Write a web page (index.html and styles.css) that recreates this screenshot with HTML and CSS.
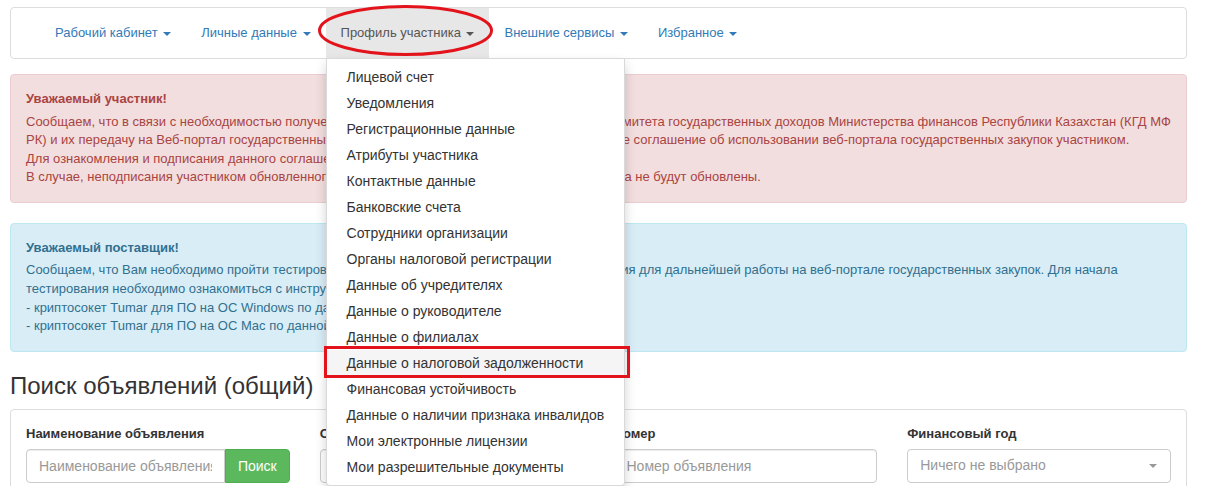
FILE: index.html
```html
<!DOCTYPE html>
<html lang="ru">
<head>
<meta charset="utf-8">
<title>Поиск объявлений</title>
<link rel="stylesheet" href="styles.css">
</head>
<body>
<div class="page">
  <nav class="navbar">
    <ul class="nav">
      <li class="nav-item"><a class="nav-link" href="#">Рабочий кабинет <span class="caret"></span></a></li>
      <li class="nav-item"><a class="nav-link" href="#">Личные данные <span class="caret"></span></a></li>
      <li class="nav-item open">
        <a class="nav-link" href="#">Профиль участника <span class="caret"></span></a>
        <svg class="mark-ellipse" viewBox="0 0 175 51" width="175" height="51" aria-hidden="true">
          <ellipse cx="87.5" cy="25.5" rx="86" ry="24" fill="none" stroke="#e3131b" stroke-width="3"/>
        </svg>
        <ul class="dropdown-menu">
          <li><a href="#">Лицевой счет</a></li>
          <li><a href="#">Уведомления</a></li>
          <li><a href="#">Регистрационные данные</a></li>
          <li><a href="#">Атрибуты участника</a></li>
          <li><a href="#">Контактные данные</a></li>
          <li><a href="#">Банковские счета</a></li>
          <li><a href="#">Сотрудники организации</a></li>
          <li><a href="#">Органы налоговой регистрации</a></li>
          <li><a href="#">Данные об учредителях</a></li>
          <li><a href="#">Данные о руководителе</a></li>
          <li><a href="#">Данные о филиалах</a></li>
          <li class="marked"><a href="#">Данные о налоговой задолженности</a></li>
          <li><a href="#">Финансовая устойчивость</a></li>
          <li><a href="#">Данные о наличии признака инвалидов</a></li>
          <li><a href="#">Мои электронные лицензии</a></li>
          <li><a href="#">Мои разрешительные документы</a></li>
        </ul>
      </li>
      <li class="nav-item"><a class="nav-link" href="#">Внешние сервисы <span class="caret"></span></a></li>
      <li class="nav-item"><a class="nav-link" href="#">Избранное <span class="caret"></span></a></li>
    </ul>
  </nav>

  <div class="alert alert-danger">
    <div class="alert-title">Уважаемый участник!</div>
    <p class="alert-text">Сообщаем, что в связи с необходимостью получения информации из информационных систем Комитета государственных доходов Министерства финансов Республики Казахстан (КГД МФ РК) и их передачу на Веб-портал государственных закупок РК, необходимо подписать обновленное соглашение об использовании веб-портала государственных закупок участником.<br>Для ознакомления и подписания данного соглашения перейдите в раздел «Соглашения».<br>В случае, неподписания участником обновленного соглашения, сведения КГД в профиле участника не будут обновлены.</p>
  </div>

  <div class="alert alert-info">
    <div class="alert-title">Уважаемый поставщик!</div>
    <p class="alert-text">Сообщаем, что Вам необходимо пройти тестирование обновленного крипто-защитного обеспечения для дальнейшей работы на веб-портале государственных закупок. Для начала тестирования необходимо ознакомиться с инструкцией по установке:<br>- криптосокет Tumar для ПО на ОС Windows по данной ссылке;<br>- криптосокет Tumar для ПО на ОС Mac по данной ссылке.</p>
  </div>

  <h3 class="page-title">Поиск объявлений (общий)</h3>

  <div class="panel">
    <div class="form-row">
      <div class="field">
        <label class="field-label">Наименование объявления</label>
        <div class="input-group">
          <input class="form-input grouped" type="text" placeholder="Наименование объявления">
          <button class="btn-search" type="button">Поиск</button>
        </div>
      </div>
      <div class="field">
        <label class="field-label">Организатор</label>
        <input class="form-input" type="text" placeholder="БИН или наименование организатора">
      </div>
      <div class="field">
        <label class="field-label">Номер</label>
        <input class="form-input" type="text" placeholder="Номер объявления">
      </div>
      <div class="field">
        <label class="field-label">Финансовый год</label>
        <div class="select-box"><span class="select-text">Ничего не выбрано</span><span class="select-caret"></span></div>
      </div>
    </div>
  </div>
</div>
</body>
</html>
```

FILE: styles.css
```css
html, body {
  margin: 0;
  padding: 0;
  overflow: hidden;
  background: #fff;
}
body {
  font-family: "Liberation Sans", Arial, Helvetica, sans-serif;
  font-size: 14px;
  line-height: 1.42857;
  color: #333;
}
.page {
  padding: 7px 20px 0 10px;
}

/* navbar */
.navbar {
  background: #fff;
  border: 1px solid #ddd;
  border-radius: 4px;
  height: 50px;
  margin-bottom: 15px;
  padding-left: 29px;
}
.nav {
  display: flex;
  list-style: none;
  margin: 0;
  padding: 0;
  height: 50px;
}
.nav-item {
  position: relative;
}
.nav-link {
  display: block;
  padding: 15px;
  font-size: 13px;
  line-height: 20px;
  color: #337ab7;
  text-decoration: none;
  white-space: nowrap;
}
.nav-item.open > .nav-link {
  background: #e7e7e7;
  color: #555;
}
.caret {
  display: inline-block;
  width: 0;
  height: 0;
  margin-left: 2px;
  vertical-align: middle;
  border-top: 4px solid;
  border-left: 4px solid transparent;
  border-right: 4px solid transparent;
}
.mark-ellipse {
  position: absolute;
  left: -8px;
  top: -3px;
  z-index: 1100;
  pointer-events: none;
}
.dropdown-menu {
  position: absolute;
  top: 100%;
  left: 0;
  z-index: 1000;
  margin: 0;
  padding: 5px 0;
  list-style: none;
  background: #fff;
  border: 1px solid rgba(0, 0, 0, 0.15);
  border-radius: 0 0 4px 4px;
  box-shadow: 0 6px 12px rgba(0, 0, 0, 0.175);
  min-width: 160px;
}
.dropdown-menu a {
  display: block;
  padding: 3px 20px;
  line-height: 20px;
  color: #333;
  text-decoration: none;
  white-space: nowrap;
}
.dropdown-menu .marked {
  position: relative;
}
.dropdown-menu .marked a {
  background: #f5f5f5;
}
.dropdown-menu .marked::after {
  content: "";
  position: absolute;
  left: -3px;
  right: -6px;
  top: -4px;
  bottom: -2px;
  border: 3px solid #e3131b;
  pointer-events: none;
}

/* alerts */
.alert {
  padding: 15px;
  border: 1px solid transparent;
  border-radius: 4px;
  margin-bottom: 20px;
  font-size: 13px;
  line-height: 1.42857;
}
.alert-danger {
  background: #f2dede;
  border-color: #ebccd1;
  color: #a94442;
}
.alert-info {
  background: #d9edf7;
  border-color: #bce8f1;
  color: #31708f;
}
.alert-title {
  font-weight: bold;
  margin-bottom: 4px;
}
.alert-text {
  margin: 0;
}

/* heading */
.page-title {
  font-size: 24px;
  font-weight: normal;
  line-height: 1.1;
  margin: 21px 0 10px;
  color: #333;
}

/* panel */
.panel {
  border: 1px solid #ddd;
  border-radius: 4px;
  padding: 15px;
  background: #fff;
}
.form-row {
  display: grid;
  grid-template-columns: repeat(4, 1fr);
  column-gap: 30px;
}
.field-label {
  display: block;
  font-weight: bold;
  font-size: 13px;
  margin-bottom: 5px;
}
.input-group {
  display: flex;
}
.form-input {
  box-sizing: border-box;
  width: 100%;
  height: 34px;
  padding: 6px 12px;
  border: 1px solid #ccc;
  border-radius: 4px;
  box-shadow: inset 0 1px 1px rgba(0, 0, 0, 0.075);
  font-family: inherit;
  font-size: 14px;
  color: #555;
  background: #fff;
}
.form-input::placeholder {
  color: #999;
}
.form-input.grouped {
  flex: 1;
  min-width: 0;
  border-radius: 4px 0 0 4px;
}
.btn-search {
  flex: none;
  height: 34px;
  padding: 6px 12px;
  border: 1px solid #4cae4c;
  border-radius: 0 4px 4px 0;
  background: #5cb85c;
  color: #fff;
  font-family: inherit;
  font-size: 14px;
  line-height: 20px;
}
.select-box {
  box-sizing: border-box;
  height: 34px;
  padding: 6px 12px;
  border: 1px solid #ccc;
  border-radius: 4px;
  display: flex;
  align-items: center;
  justify-content: space-between;
  color: #999;
}
.select-caret {
  width: 0;
  height: 0;
  border-top: 4px solid #999;
  border-left: 4px solid transparent;
  border-right: 4px solid transparent;
  margin-right: 1px;
}
```
